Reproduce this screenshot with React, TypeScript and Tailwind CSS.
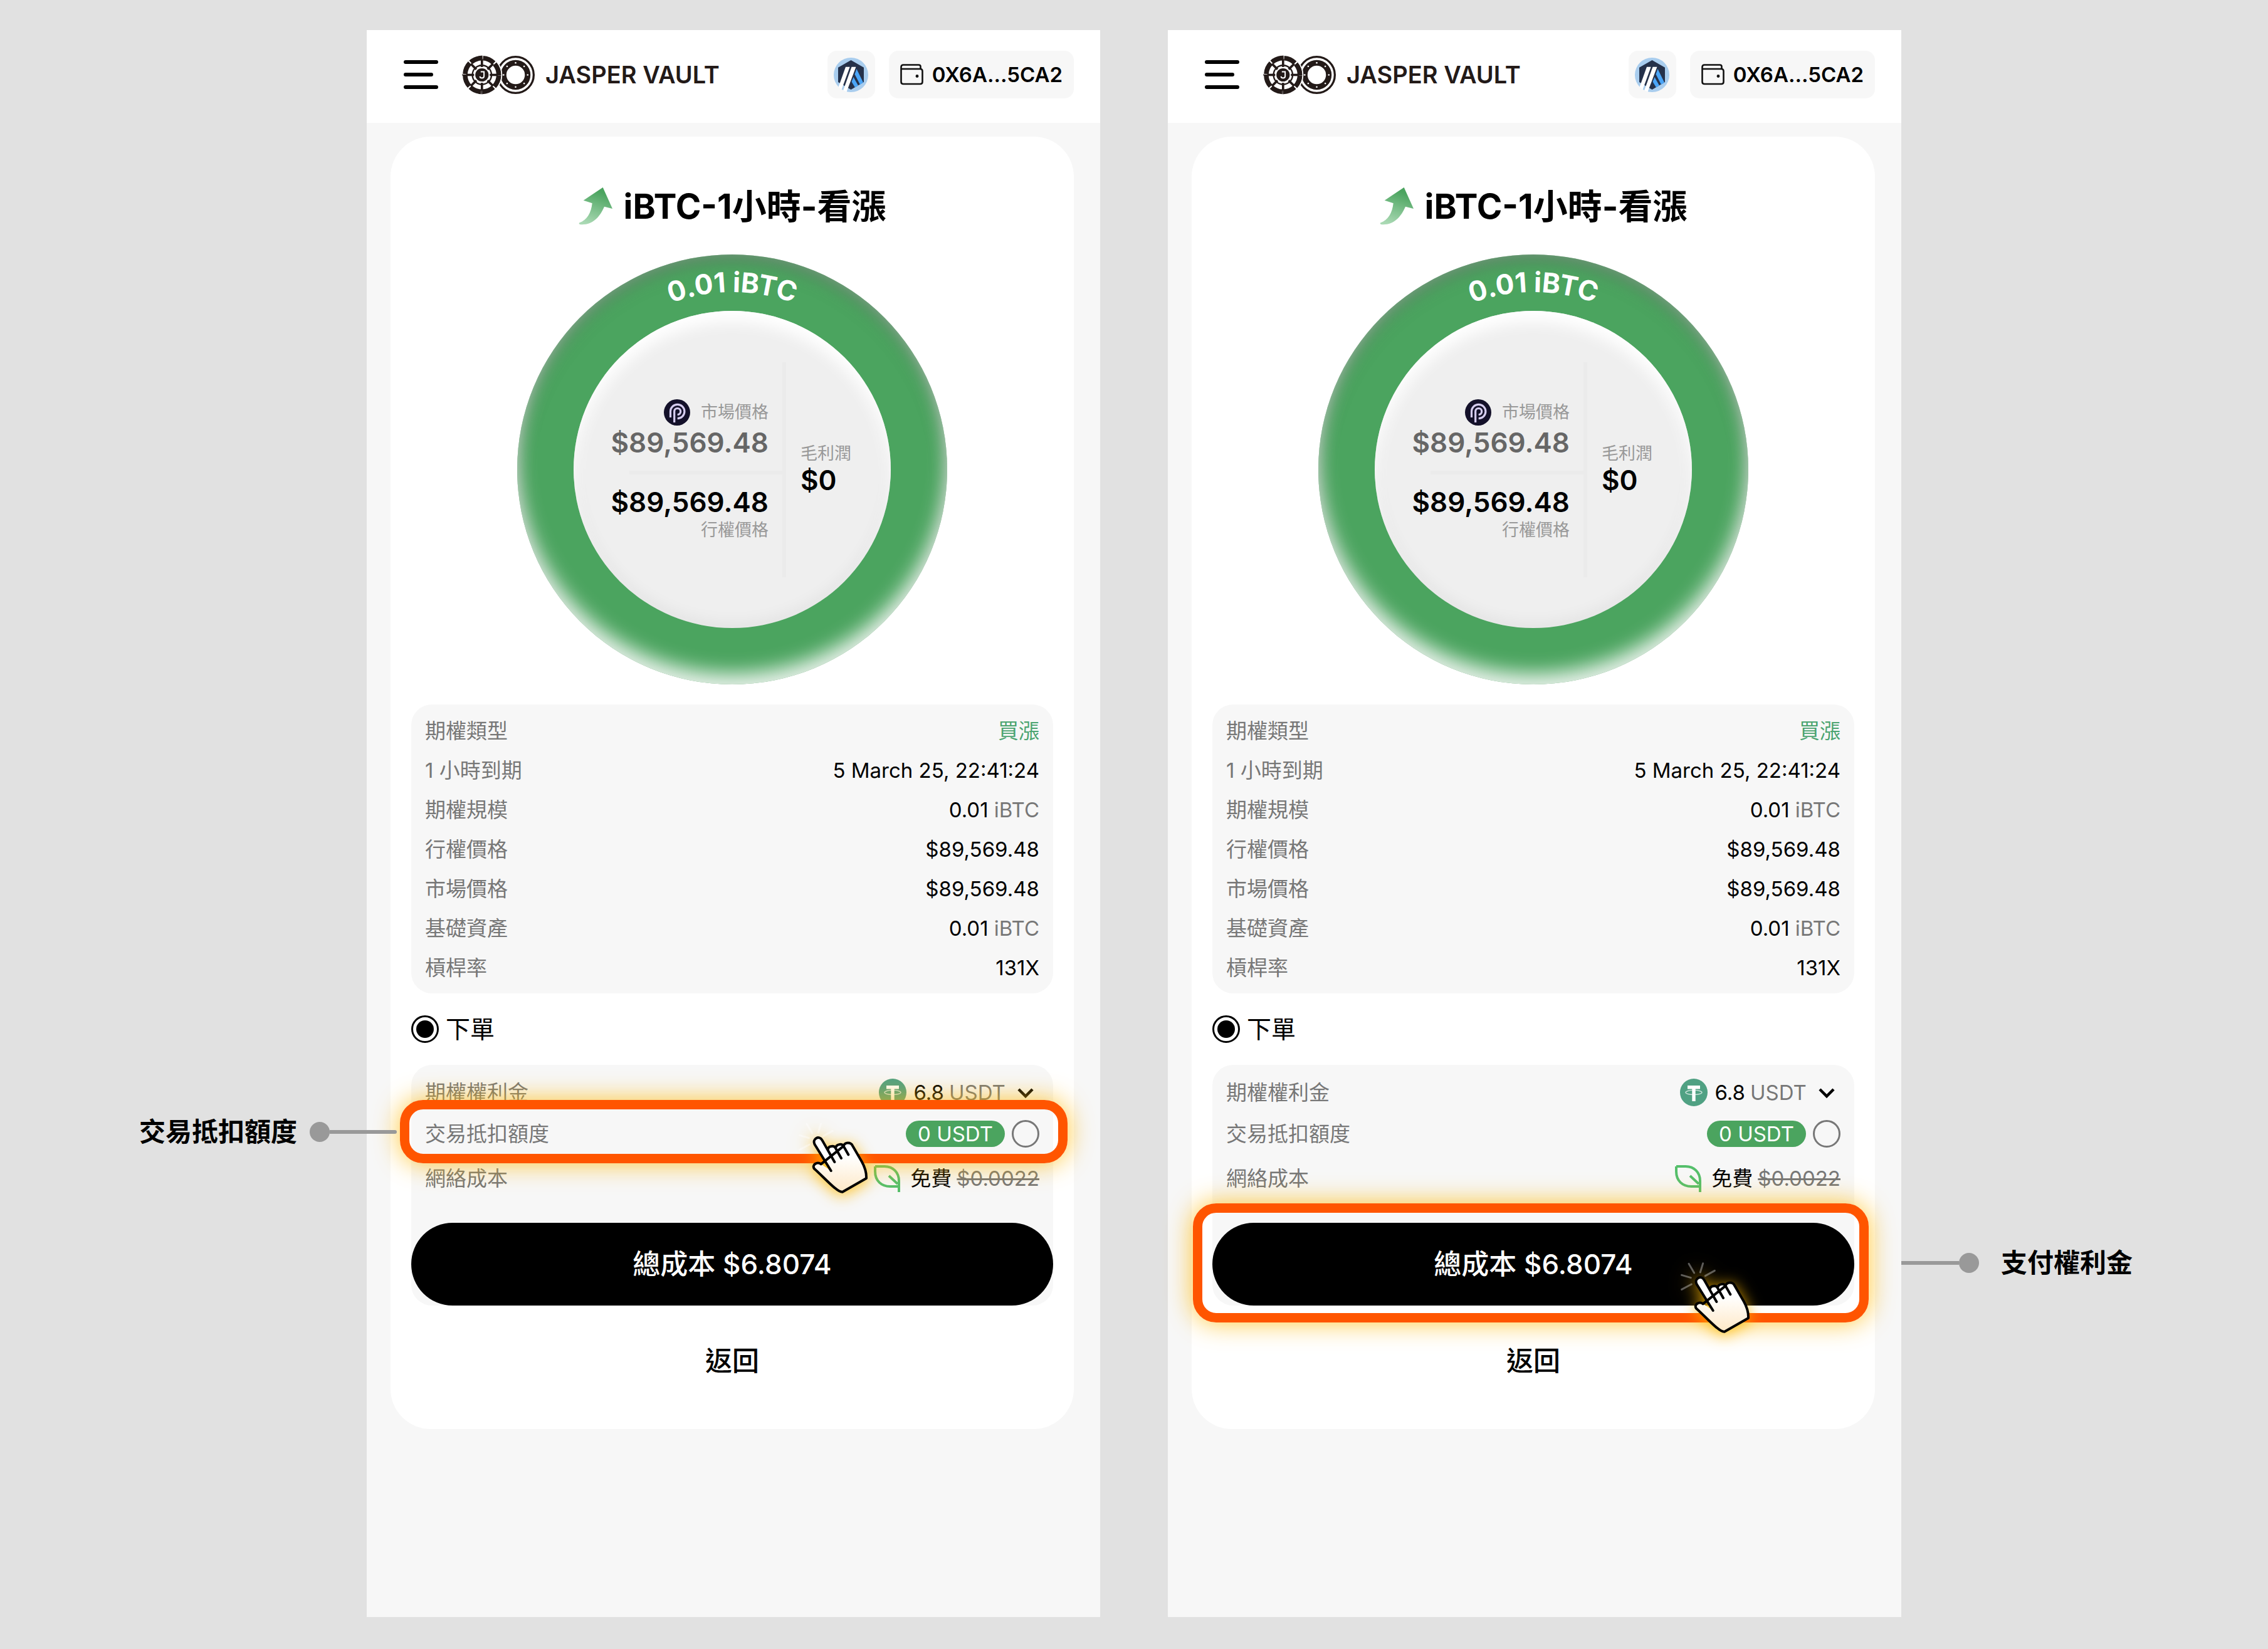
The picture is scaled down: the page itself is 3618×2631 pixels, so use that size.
import { useId, type ReactNode } from "react";

type Step = "credit" | "pay";

const SPOKES = [0, 45, 90, 135, 180, 225, 270, 315];

const details: Array<{ label: string; value: string; unit?: string; up?: boolean }> = [
  { label: "期權類型", value: "買漲", up: true },
  { label: "1 小時到期", value: "5 March 25, 22:41:24" },
  { label: "期權規模", value: "0.01", unit: "iBTC" },
  { label: "行權價格", value: "$89,569.48" },
  { label: "市場價格", value: "$89,569.48" },
  { label: "基礎資產", value: "0.01", unit: "iBTC" },
  { label: "槓桿率", value: "131X" },
];

function LogoMark() {
  return (
    <svg viewBox="0 0 354 190" className="h-[63px] w-[118px]" aria-hidden="true">
      <circle cx="260" cy="95" r="87" fill="none" stroke="#231a18" strokeWidth="10" />
      <circle cx="260" cy="95" r="58" fill="none" stroke="#231a18" strokeWidth="27" />
      {SPOKES.map((deg) => (
        <circle key={deg} cx="318" cy="95" r="4" fill="#fff" transform={`rotate(${deg} 260 95)`} />
      ))}
      <circle cx="98" cy="95" r="98" fill="#fff" />
      <circle
        cx="98"
        cy="95"
        r="81"
        fill="none"
        stroke="#231a18"
        strokeWidth="23"
        strokeDasharray="57.6 6"
        strokeDashoffset="-3"
      />
      <circle cx="98" cy="95" r="46" fill="none" stroke="#231a18" strokeWidth="7" />
      {SPOKES.map((deg) => (
        <path key={deg} d="M136 95H174" stroke="#231a18" strokeWidth="11" transform={`rotate(${deg} 98 95)`} />
      ))}
      <path d="M2 95H60M98 2V50M98 140V188M136 95H190" stroke="#231a18" strokeWidth="5" />
      <circle cx="98" cy="95" r="32" fill="#231a18" />
      <path d="M92 80H108V100Q108 110 98 110Q89 110 88 102" fill="none" stroke="#fff" strokeWidth="6" />
    </svg>
  );
}

function ArbitrumIcon() {
  return (
    <svg viewBox="0 0 55 55" className="size-[55px]" aria-hidden="true">
      <circle cx="27.5" cy="27.5" r="27.5" fill="#a9cdee" />
      <path d="M27.5 4 48 15.7V39L27.5 51 7 39V15.7Z" fill="#25314a" />
      <path d="M36.5 18 47 39.5 42 43 33.5 26.5Z" fill="#4aa5f7" />
      <path d="M31.5 31 39 44.5 34 47.5 28.5 38.5Z" fill="#4aa5f7" />
      <path d="M19 14.7H25.7L12.5 51 7.5 47Z" fill="#fff" />
      <path d="M28.5 14.7H35.5L20.5 54.5 15 52.5Z" fill="#fff" />
    </svg>
  );
}

function WalletIcon() {
  return (
    <svg viewBox="0 0 37 34" className="h-[34px] w-[37px]" fill="none" stroke="#111" strokeWidth="2.6" aria-hidden="true">
      <path d="M32.5 8V4.5Q32.5 1.5 29.5 1.5H5Q1.5 1.5 1.5 5V28.5Q1.5 32 5 32H32Q35.5 32 35.5 28.5V11.5Q35.5 8 32 8H1.5" />
      <circle cx="27" cy="19.5" r="2.4" fill="#111" stroke="none" />
    </svg>
  );
}

function TrendArrow() {
  const id = useId();
  return (
    <svg viewBox="0 0 54 60" className="h-[60px] w-[54px]" aria-hidden="true">
      <defs>
        <linearGradient id={id} x1="0.6" y1="0" x2="0.3" y2="1">
          <stop offset="0.1" stopColor="#4ba45f" />
          <stop offset="1" stopColor="#aad9b4" />
        </linearGradient>
      </defs>
      <path
        d="M38.7 0 54 34 41 30.7C34 47 22 61 2 59Q0 58 1 56.5C14 52 20 40 21.7 25.3L7.7 20.7Z"
        fill={`url(#${id})`}
      />
    </svg>
  );
}

function PythIcon() {
  return (
    <svg viewBox="0 0 42 42" className="size-[42px]" aria-hidden="true">
      <circle cx="21" cy="21" r="21" fill="#14112a" />
      <path
        d="M10.5 29V19.5A11.2 11.2 0 1 1 21.7 30.7M16.7 37V19.5A5 5 0 1 1 21.7 24.5"
        fill="none"
        stroke="#d6cdf0"
        strokeWidth="3.2"
      />
    </svg>
  );
}

function TetherIcon() {
  return (
    <svg viewBox="0 0 44 44" className="size-[44px]" aria-hidden="true">
      <circle cx="22" cy="22" r="22" fill="#50a183" />
      <path d="M12 11H32V16.5H24.7V36H19.3V16.5H12Z" fill="#fff" />
      <ellipse cx="22" cy="22" rx="13" ry="3.6" fill="none" stroke="#fff" strokeOpacity="0.7" strokeWidth="1.4" />
    </svg>
  );
}

function LeafIcon() {
  return (
    <svg viewBox="0 0 42 43" className="h-[43px] w-[42px]" fill="none" stroke="#55bf6b" strokeWidth="4" aria-hidden="true">
      <path d="M2 2H17C31 2 40 12 40 25V43M2 2V10C2 25 12 34 26 34H40M24 17 38 30" />
    </svg>
  );
}

function HandPointer({ className }: { className: string }) {
  const id = useId();
  return (
    <svg
      viewBox="0 0 330 339"
      className={`absolute h-[113px] w-[110px] overflow-visible drop-shadow-[0_4px_12px_rgba(255,184,0,0.85)] ${className}`}
      aria-hidden="true"
    >
      <defs>
        <linearGradient id={id} x1="0" y1="0" x2="0" y2="1">
          <stop offset="0.35" stopColor="#fff" />
          <stop offset="1" stopColor="#fee8c6" />
        </linearGradient>
      </defs>
      <path
        d="M36 4 62 48M104 2 91 45M160 37 115 62M2 58 46 71M2 127 49 102"
        stroke="#fff"
        strokeOpacity="0.35"
        strokeWidth="9"
        strokeLinecap="round"
      />
      <path
        d="M152 228 74 102C60 74 96 56 110 82L138 124C140 108 168 106 174 120C176 100 204 96 212 110C218 90 246 90 255 108L299 184C316 214 322 236 321 264L207 329C196 330 184 322 170 310C138 284 100 242 72 218C58 200 86 182 104 196Z"
        fill={`url(#${id})`}
      />
      <path
        d="M152 228 74 102C60 74 96 56 110 82L169 186M138 124C140 108 168 106 174 120L201 168M174 120C176 100 204 96 212 110L235 151M212 110C218 90 246 90 255 108L299 184C316 214 322 236 321 264L207 329C196 330 184 322 170 310C138 284 100 242 72 218C58 200 86 182 104 196Z"
        fill="none"
        stroke="#000"
        strokeWidth="12"
        strokeLinecap="round"
        strokeLinejoin="round"
      />
    </svg>
  );
}

function Highlight({ className, children }: { className: string; children: ReactNode }) {
  return (
    <div className={`pointer-events-none absolute z-10 ${className}`}>
      <div className="absolute inset-0 rounded-[37px] border-[15px] border-[#ff5500] shadow-[0_0_42px_rgba(255,184,0,0.8)]" />
      {children}
    </div>
  );
}

function AppHeader() {
  return (
    <header className="flex items-center bg-white pt-[33px] pr-[42px] pb-[39px] pl-[59px]">
      <button type="button" aria-label="選單" className="flex flex-col gap-[14px]">
        <span className="h-[6px] w-[55px] rounded-full bg-black" />
        <span className="h-[6px] w-[47px] rounded-full bg-black" />
        <span className="h-[6px] w-[55px] rounded-full bg-black" />
      </button>
      <a href="#" className="ml-[37px] flex items-center gap-[16px]">
        <LogoMark />
        <span className="text-[38px] leading-[42px] font-semibold text-[#231a18]">JASPER VAULT</span>
      </a>
      <button
        type="button"
        aria-label="Arbitrum"
        className="ml-auto flex size-[76px] items-center justify-center rounded-[15px] bg-[#f7f7f7]"
      >
        <ArbitrumIcon />
      </button>
      <button
        type="button"
        className="ml-[22px] flex h-[76px] items-center gap-[14px] rounded-[15px] bg-[#f7f7f7] px-[18px] text-[33px] font-semibold"
      >
        <WalletIcon />
        0X6A...5CA2
      </button>
    </header>
  );
}

function PriceDial() {
  const id = useId();
  return (
    <div className="relative mx-auto mt-[46px] size-[686px] rounded-full bg-[#4ba45f] p-[90px] shadow-[inset_0_-18px_30px_rgba(255,255,255,0.85),inset_0_10px_24px_rgba(100,100,100,0.5)]">
      <svg viewBox="0 0 686 686" className="absolute inset-0 size-full">
        <path id={id} d="M60 343A283 283 0 0 1 626 343" fill="none" />
        <text className="fill-white text-[44px] font-bold" textAnchor="middle">
          <textPath href={`#${id}`} startOffset="50%">
            0.01 iBTC
          </textPath>
        </text>
      </svg>
      <div className="flex size-full items-center rounded-full bg-[#efefef] shadow-[inset_0_18px_24px_#fff,inset_0_-8px_24px_rgba(0,0,0,0.05)]">
        <div className="flex w-[333px] flex-col items-end pt-[2px]">
          <div className="flex items-center gap-[17px] pr-[22px] text-[27px] leading-[42px] text-[#999]">
            <PythIcon />
            市場價格
          </div>
          <div className="mt-[5px] pr-[22px] text-[44px] leading-[45px] font-semibold text-[#666]">$89,569.48</div>
          <div className="mt-[22px] h-[6px] w-[244px] bg-[#ebebeb]" />
          <div className="mt-[22px] pr-[22px] text-[44px] leading-[45px] font-semibold">$89,569.48</div>
          <div className="mt-[5px] pr-[22px] text-[27px] leading-[34px] text-[#999]">行權價格</div>
        </div>
        <div className="h-[343px] w-[6px] bg-[#ebebeb]" />
        <div className="pb-[6px] pl-[23px]">
          <div className="text-[27px] leading-[40px] text-[#999]">毛利潤</div>
          <div className="text-[44px] leading-[45px] font-semibold">$0</div>
        </div>
      </div>
    </div>
  );
}

function DetailList() {
  return (
    <dl className="mt-[32px] rounded-[33px] bg-[#f7f7f7] px-[22px] py-[10px]">
      {details.map((row) => (
        <div key={row.label} className="flex h-[63px] items-center justify-between">
          <dt className="text-[#777]">{row.label}</dt>
          <dd className={row.up ? "text-[#4ba470]" : ""}>
            {row.value}
            {row.unit ? <span className="text-[#777]"> {row.unit}</span> : null}
          </dd>
        </div>
      ))}
    </dl>
  );
}

function CostPanel({ step }: { step: Step }) {
  const id = useId();
  return (
    <div className="rounded-[33px] bg-[#f7f7f7] pt-[11px]">
      <div className="flex h-[66px] items-center px-[22px]">
        <label htmlFor={`${id}-token`} className="mr-auto text-[#777]">
          期權權利金
        </label>
        <TetherIcon />
        <span className="ml-[11px]">6.8</span>
        <div className="relative ml-[8px]">
          <select id={`${id}-token`} className="block appearance-none bg-transparent pr-[54px] text-[#777]">
            <option>USDT</option>
          </select>
          <svg
            viewBox="0 0 44 44"
            className="pointer-events-none absolute top-1/2 right-0 size-[44px] -translate-y-1/2"
            fill="none"
            stroke="#000"
            strokeWidth="4.5"
            aria-hidden="true"
          >
            <path d="M11 17 22 28 33 17" />
          </svg>
        </div>
      </div>

      <div className="relative flex h-[66px] items-center gap-[11px] px-[22px]">
        <label htmlFor={`${id}-credit`} className="mr-auto text-[#777]">
          交易抵扣額度
        </label>
        <span className="rounded-full bg-[#4ba45f] px-[19px] leading-[42px] text-white">0 USDT</span>
        <input
          id={`${id}-credit`}
          type="checkbox"
          className="size-[44px] appearance-none rounded-full border-[3px] border-[#777]"
        />
        {step === "credit" ? (
          <Highlight className="-top-[21px] -right-[23px] -bottom-[14px] -left-[18px]">
            <div className="absolute top-1/2 right-full mr-[5px] flex -translate-y-1/2 items-center">
              <span className="text-[42px] leading-[48px] font-bold whitespace-nowrap">交易抵扣額度</span>
              <span className="ml-[20px] size-[32px] rounded-full bg-[#999]" />
              <span className="h-[6px] w-[107px] rounded-r-full bg-[#999]" />
            </div>
            <HandPointer className="top-[37px] right-[318px]" />
          </Highlight>
        ) : null}
      </div>

      <div className="flex h-[76px] items-center px-[22px]">
        <span className="mr-auto text-[#777]">網絡成本</span>
        <LeafIcon />
        <span className="ml-[16px]">免費</span>
        <s className="ml-[8px] text-[#777]">$0.0022</s>
      </div>

      <div className="relative mt-[33px]">
        <button type="button" className="h-[132px] w-full rounded-full bg-black text-[44px] font-medium text-white">
          總成本 $6.8074
        </button>
        {step === "pay" ? (
          <Highlight className="-top-[31px] -right-[23px] -bottom-[27px] -left-[31px]">
            <div className="absolute top-1/2 left-full ml-[52px] flex -translate-y-1/2 items-center">
              <span className="h-[6px] w-[92px] bg-[#999]" />
              <span className="size-[32px] rounded-full bg-[#999]" />
              <span className="ml-[35px] text-[42px] leading-[48px] font-bold whitespace-nowrap">支付權利金</span>
            </div>
            <HandPointer className="right-[189px] -bottom-[18px]" />
          </Highlight>
        ) : null}
      </div>
    </div>
  );
}

function Phone({ step }: { step: Step }) {
  const name = useId();
  return (
    <section className="aspect-[1170/2532] bg-[#f7f7f7] text-[33px] leading-[42px] text-black">
      <AppHeader />
      <main className="mt-[22px] mr-[42px] ml-[38px] rounded-[64px] bg-white px-[33px] pt-[80px] pb-[54px]">
        <h1 className="flex items-center justify-center gap-[18px] text-[55px] leading-[62px] font-bold">
          <TrendArrow />
          iBTC-1小時-看漲
        </h1>
        <PriceDial />
        <DetailList />
        <label className="flex h-[114px] items-center gap-[11px] text-[39px]">
          <input
            type="radio"
            name={name}
            defaultChecked
            className="size-[44px] appearance-none rounded-full border-[3px] border-black bg-black bg-clip-content p-[5px]"
          />
          下單
        </label>
        <CostPanel step={step} />
        <button type="button" className="mt-[33px] h-[110px] w-full text-[43px] font-medium">
          返回
        </button>
      </main>
    </section>
  );
}

export default function App() {
  return (
    <div className="min-h-screen bg-[#e1e1e1] pt-[48px] pb-[51px] font-['Inter','Noto_Sans_CJK_TC',sans-serif]">
      <div className="mx-auto grid max-w-[2448px] grid-cols-2 gap-[108px]">
        <Phone step="credit" />
        <Phone step="pay" />
      </div>
    </div>
  );
}
